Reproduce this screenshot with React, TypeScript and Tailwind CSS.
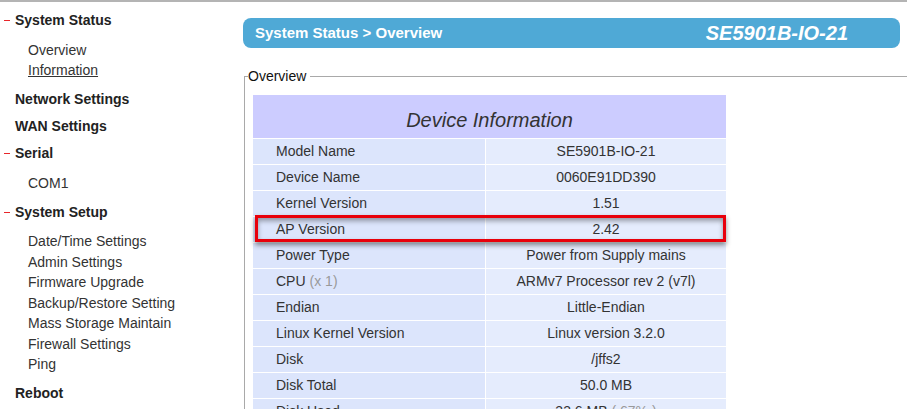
const menu = [
  { title: 'System Status', open: true, items: ['Overview', 'Information'], active: 'Information' },
  { title: 'Network Settings', open: false, items: [] },
  { title: 'WAN Settings', open: false, items: [] },
  { title: 'Serial', open: true, items: ['COM1'] },
  {
    title: 'System Setup',
    open: true,
    items: [
      'Date/Time Settings',
      'Admin Settings',
      'Firmware Upgrade',
      'Backup/Restore Setting',
      'Mass Storage Maintain',
      'Firewall Settings',
      'Ping',
    ],
  },
  { title: 'Reboot', open: false, items: [] },
];

const rows: { label: string; note?: string; value: string; valueNote?: string }[] = [
  { label: 'Model Name', value: 'SE5901B-IO-21' },
  { label: 'Device Name', value: '0060E91DD390' },
  { label: 'Kernel Version', value: '1.51' },
  { label: 'AP Version', value: '2.42' },
  { label: 'Power Type', value: 'Power from Supply mains' },
  { label: 'CPU', note: '(x 1)', value: 'ARMv7 Processor rev 2 (v7l)' },
  { label: 'Endian', value: 'Little-Endian' },
  { label: 'Linux Kernel Version', value: 'Linux version 3.2.0' },
  { label: 'Disk', value: '/jffs2' },
  { label: 'Disk Total', value: '50.0 MB' },
  { label: 'Disk Used', value: '33.6 MB', valueNote: '( 67% )' },
];

function Sidebar() {
  return (
    <nav className="w-[244px] shrink-0 pt-[5px] text-[14px] text-[#333]">
      {menu.map((m) => (
        <div key={m.title}>
          <div className="relative h-[27px] flex items-center pl-[15px] font-bold text-[#222]">
            {m.open && <span className="absolute left-[4px] top-[13px] w-[6px] h-px bg-[#e8262a]" />}
            {m.title}
          </div>
          {m.items.length > 0 && (
            <ul className="pt-[5.5px] pb-[5.5px] pl-[28px]">
              {m.items.map((it) => (
                <li key={it} className={`leading-[20.5px] ${m.active === it ? 'underline' : ''}`}>
                  {it}
                </li>
              ))}
            </ul>
          )}
        </div>
      ))}
    </nav>
  );
}

function DeviceTable() {
  return (
    <div className="relative w-[473px] text-[14px] text-[#333]">
      <div className="h-[43px] bg-[#ccccff] flex items-end justify-center pb-[3px] text-[20px] italic text-[#333]">
        Device Information
      </div>
      {rows.map((r) => (
        <div key={r.label} className="grid grid-cols-[232px_241px] border-t border-white h-[26px]">
          <div className="bg-[#dce5fc] pl-[23px] flex items-center">
            {r.label}
            {r.note && <span className="ml-[4px] text-[#999]">{r.note}</span>}
          </div>
          <div className="bg-[#e5ecfd] border-l border-white flex items-center justify-center">
            {r.value}
            {r.valueNote && <span className="ml-[4px] text-[#999]">{r.valueNote}</span>}
          </div>
        </div>
      ))}
      {/* highlight around AP Version */}
      <div className="absolute left-[2px] top-[120px] w-[471px] h-[27px] border-[3px] border-[#e8000b] shadow-[0_3px_5px_rgba(0,0,0,0.45),inset_0_3px_5px_rgba(0,0,0,0.35)]" />
    </div>
  );
}

export default function App() {
  return (
    <div
      className="h-[409px] w-[907px] overflow-hidden bg-white border-t-2 border-[#b4b4b4] flex"
      style={{ fontFamily: '"Liberation Sans", Arial, sans-serif' }}
    >
      <Sidebar />
      <main className="flex-1 min-w-0 pt-[16px] pr-[7px]">
        <div className="ml-[-1px] h-[30px] rounded-[8px] bg-[#4fa9d6] flex items-center justify-between pl-[12px] pr-[52px] text-white">
          <span className="text-[15px] font-bold">System Status &gt; Overview</span>
          <span className="text-[20px] font-bold italic">SE5901B-IO-21</span>
        </div>
        <fieldset className="mt-[20px] mr-[-40px] border border-[#a9a9a9] pl-[8px] pt-[11px]">
          <legend className="ml-[-5px] pr-[4px] text-[14px] leading-4 text-[#111]">Overview</legend>
          <DeviceTable />
        </fieldset>
      </main>
    </div>
  );
}
